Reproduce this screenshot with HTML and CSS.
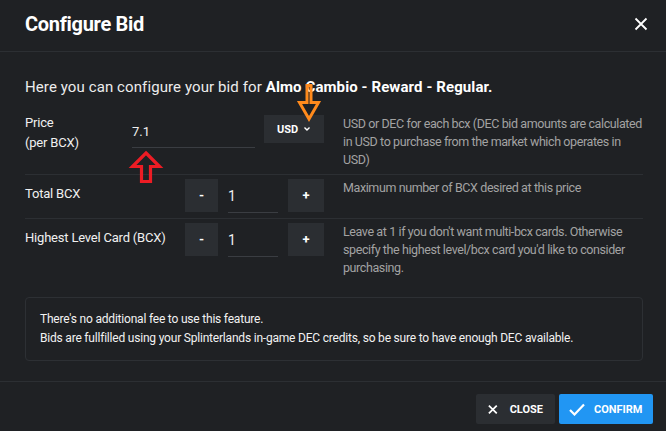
FILE: index.html
```html
<!DOCTYPE html>
<html>
<head>
<meta charset="utf-8">
<link rel="stylesheet" href="styles.css">
</head>
<body>
<div class="modal">
  <div class="header">
    <h1 class="title">Configure Bid</h1>
    <svg class="close-x" width="14" height="14" viewBox="0 0 14 14"><path d="M1.5 1.5 L12.5 12.5 M12.5 1.5 L1.5 12.5" stroke="#fff" stroke-width="1.8" fill="none"/></svg>
  </div>
  <div class="body">
    <p class="intro">Here you can configure your bid for <b>Almo Cambio - Reward - Regular.</b></p>
    <div class="form">
      <div class="row row-price">
        <div class="label label-price">Price<br>(per BCX)</div>
        <div class="control">
          <div class="input input-price">7.1</div>
          <div class="select">USD <svg width="8" height="6" viewBox="0 0 8 6"><path d="M1.5 1.5 L4 4 L6.5 1.5" stroke="#fff" stroke-width="1.4" fill="none"/></svg></div>
        </div>
        <div class="desc">USD or DEC for each bcx (DEC bid amounts are calculated in USD to purchase from the market which operates in<br>USD)</div>
      </div>
      <div class="row">
        <div class="label">Total BCX</div>
        <div class="control">
          <div class="btn-step minus">-</div>
          <div class="input input-num">1</div>
          <div class="btn-step plus">+</div>
        </div>
        <div class="desc">Maximum number of BCX desired at this price</div>
      </div>
      <div class="row row-last">
        <div class="label">Highest Level Card (BCX)</div>
        <div class="control">
          <div class="btn-step minus">-</div>
          <div class="input input-num">1</div>
          <div class="btn-step plus">+</div>
        </div>
        <div class="desc">Leave at 1 if you don't want multi-bcx cards. Otherwise specify the highest level/bcx card you'd like to consider purchasing.</div>
      </div>
    </div>
    <div class="info">
      There's no additional fee to use this feature.<br>
      Bids are fullfilled using your Splinterlands in-game DEC credits, so be sure to have enough DEC available.
    </div>
  </div>
  <div class="footer">
    <div class="btn btn-close"><svg width="11" height="11" viewBox="0 0 11 11"><path d="M1 1 L10 10 M10 1 L1 10" stroke="#fff" stroke-width="2" fill="none"/></svg><span>CLOSE</span></div>
    <div class="btn btn-confirm"><svg width="16" height="13" viewBox="0 0 16 13"><path d="M1 7 L5.5 11.5 L15 1.5" stroke="#fff" stroke-width="2.2" fill="none"/></svg><span>CONFIRM</span></div>
  </div>
  <svg class="annot" width="666" height="431" viewBox="0 0 666 431">
    <polygon points="307,85.5 311,85.5 311,102.5 318.5,102.5 309,119 299.5,102.5 307,102.5" fill="none" stroke="#ff8a1c" stroke-width="3" stroke-linejoin="miter"/>
    <polygon points="146,153 159.5,166.5 150.5,166.5 150.5,181.5 141.5,181.5 141.5,166.5 132.5,166.5" fill="none" stroke="#ec1c24" stroke-width="3.2" stroke-linejoin="miter"/>
  </svg>
</div>
</body>
</html>
```
FILE: styles.css
```css
* { box-sizing: border-box; }
html, body { margin: 0; padding: 0; }
body {
  background: #1f2124;
  font-family: Roboto, "Liberation Sans", sans-serif;
  color: #e8e8e8;
  width: 666px;
  height: 431px;
  overflow: hidden;
}
.modal { position: relative; width: 666px; height: 431px; }
.header {
  height: 52px;
  padding: 12px 18px 0 25px;
  display: flex;
  justify-content: space-between;
  align-items: flex-start;
  border-bottom: 1px solid #2c2f33;
}
.title {
  margin: 0;
  font-size: 20px;
  line-height: 24px;
  font-weight: 700;
  color: #fff;
  letter-spacing: -0.3px;
}
.close-x { margin-top: 5px; }
.body { padding: 0 23px 0 25px; }
.intro {
  margin: 25px 0 0;
  font-size: 15px;
  line-height: 20px;
  color: #ececec;
  letter-spacing: 0.1px;
}
.intro b { font-weight: 700; color: #fff; }
.form { margin-top: 16px; }
.row {
  display: flex;
  align-items: flex-start;
  padding: 4px 0 5px;
  border-bottom: 1px solid #2c2f33;
}
.row-price { padding-top: 2px; }
.row-last { border-bottom: none; padding-bottom: 0; }
.label {
  width: 107px;
  flex: none;
  white-space: nowrap;
  font-size: 13px;
  line-height: 20px;
  margin-top: 5px;
  color: #f0f0f0;
  letter-spacing: -0.2px;
}
.label-price { margin-top: -2px; }
.control {
  width: 192px;
  flex: none;
  display: flex;
  justify-content: flex-end;
  align-items: flex-start;
}
.input {
  border-bottom: 1px solid #3a3d42;
  font-size: 13px;
  color: #f0f0f0;
}
.input-price {
  width: 123px;
  height: 33px;
  line-height: 34px;
  margin-right: 9px;
}
.select {
  width: 60px;
  height: 28px;
  background: #2b2e32;
  display: flex;
  align-items: center;
  justify-content: center;
  gap: 5px;
  font-size: 11px;
  font-weight: 700;
  color: #fff;
}
.btn-step {
  height: 33px;
  background: #2b2e32;
  display: flex;
  align-items: center;
  justify-content: center;
  font-size: 13px;
  font-weight: 700;
  color: #fff;
}
.minus { width: 33px; }
.plus { width: 36px; }
.input-num {
  width: 50px;
  height: 34px;
  margin: 0 10px;
  line-height: 34px;
  font-size: 14px;
}
.desc {
  margin-left: 19px;
  width: 300px;
  font-size: 12.5px;
  line-height: 18px;
  color: #a3a3a3;
  letter-spacing: -0.4px;
}
.info {
  margin-top: 20px;
  border: 1px solid #2d3034;
  border-radius: 4px;
  padding: 12px 14px;
  font-size: 12px;
  line-height: 19px;
  color: #f2f2f2;
  letter-spacing: -0.2px;
}
.footer {
  position: absolute;
  left: 0;
  right: 0;
  top: 381px;
  border-top: 1px solid #2c2f33;
  padding: 12px 13px 0;
  display: flex;
  justify-content: flex-end;
  gap: 4px;
}
.btn {
  height: 30px;
  display: flex;
  align-items: center;
  font-size: 11px;
  font-weight: 700;
  color: #fff;
  border-radius: 2px;
}
.btn-close { background: #2b2e32; padding: 0 12px; gap: 12px; width: 79px; }
.btn-confirm { background: #2196f3; padding: 0 10px; gap: 9px; width: 94px; }
.annot { position: absolute; left: 0; top: 0; pointer-events: none; }
```
